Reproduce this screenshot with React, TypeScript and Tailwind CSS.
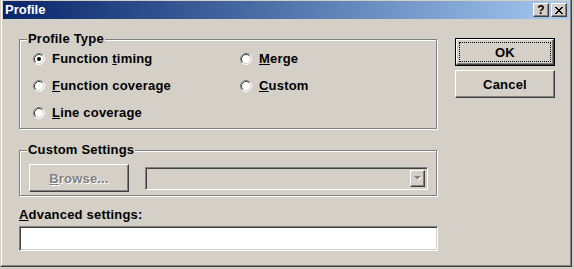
import React from "react";

function Radio({ checked }: { checked?: boolean }) {
  return (
    <svg width="12" height="12" viewBox="0 0 12 12" className="shrink-0">
      <circle cx="6" cy="6" r="5" fill="#fff" />
      <path d="M2.11 9.89 A5.5 5.5 0 0 1 9.89 2.11" stroke="#808080" fill="none" />
      <path d="M9.89 2.11 A5.5 5.5 0 0 1 2.11 9.89" stroke="#fff" fill="none" />
      <path d="M2.82 9.18 A4.5 4.5 0 0 1 9.18 2.82" stroke="#404040" fill="none" />
      <path d="M9.18 2.82 A4.5 4.5 0 0 1 2.82 9.18" stroke="#d4d0c8" fill="none" />
      {checked && <circle cx="6" cy="6" r="2" fill="#000" />}
    </svg>
  );
}

function RadioItem({ checked, pre, u, post }: { checked?: boolean; pre?: string; u: string; post: string }) {
  return (
    <div className="h-[27px] flex items-center gap-[7px]">
      <Radio checked={checked} />
      <span className="whitespace-nowrap">
        {pre}
        <u className="underline underline-offset-[1px]">{u}</u>
        {post}
      </span>
    </div>
  );
}

const raised =
  "border border-t-white border-l-white border-r-[#404040] border-b-[#404040] shadow-[inset_-1px_-1px_0_#808080]";
const sunken =
  "border border-t-[#808080] border-l-[#808080] border-r-white border-b-white shadow-[inset_1px_1px_0_#404040,inset_-1px_-1px_0_#d4d0c8]";
const etched = "border border-[#808080] shadow-[inset_1px_1px_0_#fff,1px_1px_0_#fff]";

function TitleBtn({ children }: { children: React.ReactNode }) {
  return (
    <div className={`w-[16px] h-[14px] bg-[#d4d0c8] flex items-center justify-center ${raised}`}>{children}</div>
  );
}

export default function App() {
  return (
    <div className="w-[574px] h-[269px] bg-[#d4d0c8] overflow-hidden font-['Liberation_Sans',Arial,sans-serif] text-[13px] font-bold tracking-[0.2px] text-black leading-[15px]">
      <div className="-mt-[2px] w-[572px] h-[269px] border border-t-[#d4d0c8] border-l-[#d4d0c8] border-r-[#404040] border-b-[#404040]">
        <div className="h-full border border-t-white border-l-white border-r-[#808080] border-b-[#808080] p-[1px] flex flex-col">
          {/* Title bar */}
          <div className="h-[18px] shrink-0 flex items-center bg-linear-to-r from-[#0a246a] to-[#a6caf0] pl-[2px] pr-[2px]">
            <span className="text-white leading-[18px] tracking-normal">Profile</span>
            <div className="ml-auto flex gap-[2px]">
              <TitleBtn>
                <span className="text-[12px] leading-[12px] font-bold tracking-normal">?</span>
              </TitleBtn>
              <TitleBtn>
                <svg width="8" height="7" viewBox="0 0 8 7">
                  <path d="M0 0h2v1h1v1h2V1h1V0h2v1H7v1H6v1H5v1h1v1h1v1h1v1H6V6H5V5H3v1H2v1H0V6h1V5h1V4h1V3H2V2H1V1H0z" fill="#000" />
                </svg>
              </TitleBtn>
            </div>
          </div>

          {/* Body */}
          <div className="flex pl-[16px]">
            {/* Left column */}
            <div className="w-[419px] pt-[20px] flex flex-col">
              <div className={`relative w-[418px] h-[90px] ${etched} pt-[5px] pl-[13px]`}>
                <span className="absolute left-[7px] top-[-9px] px-[1px] bg-[#d4d0c8] whitespace-nowrap">Profile Type</span>
                <div className="grid grid-cols-[207px_1fr]">
                  <RadioItem checked pre="Function " u="t" post="iming" />
                  <RadioItem u="M" post="erge" />
                  <RadioItem u="F" post="unction coverage" />
                  <RadioItem u="C" post="ustom" />
                  <RadioItem u="L" post="ine coverage" />
                </div>
              </div>

              <div className={`relative mt-[21px] w-[418px] h-[46px] ${etched} pt-[13px] pl-[9px]`}>
                <span className="absolute left-[7px] top-[-9px] px-[1px] bg-[#d4d0c8] whitespace-nowrap">Custom Settings</span>
                <div className="flex items-center gap-[16px] h-[28px]">
                  <div className={`w-[100px] h-[28px] bg-[#d4d0c8] flex items-center justify-center ${raised}`}>
                    <span className="text-[#808080] [text-shadow:1px_1px_0_#fff]">
                      <u className="underline underline-offset-[1px]">B</u>rowse...
                    </span>
                  </div>
                  <div className={`w-[283px] h-[23px] bg-[#d4d0c8] flex justify-end p-[2px] ${sunken}`}>
                    <div className={`w-[15px] h-full bg-[#d4d0c8] flex items-center justify-center ${raised}`}>
                      <svg width="8" height="5" viewBox="0 0 8 5">
                        <path d="M1 1h7L4.5 4.5z" fill="#fff" />
                        <path d="M0 0h7L3.5 3.5z" fill="#808080" />
                      </svg>
                    </div>
                  </div>
                </div>
              </div>

              <div className="mt-[11px] whitespace-nowrap">
                <u className="underline underline-offset-[1px]">A</u>dvanced settings:
              </div>
              <div className={`mt-[4px] w-[419px] h-[25px] bg-white ${sunken}`} />
            </div>

            {/* Right column */}
            <div className="ml-[17px] pt-[19px] flex flex-col gap-[4px]">
              <div className="w-[100px] h-[28px] border border-black">
                <div className={`relative w-full h-full bg-[#d4d0c8] flex items-center justify-center ${raised}`}>
                  <div className="absolute left-[2px] top-[2px] right-[2px] bottom-[2px] border border-dotted border-black" />
                  <span>OK</span>
                </div>
              </div>
              <div className={`w-[100px] h-[28px] bg-[#d4d0c8] flex items-center justify-center ${raised}`}>
                <span>Cancel</span>
              </div>
            </div>
          </div>
        </div>
      </div>
    </div>
  );
}
